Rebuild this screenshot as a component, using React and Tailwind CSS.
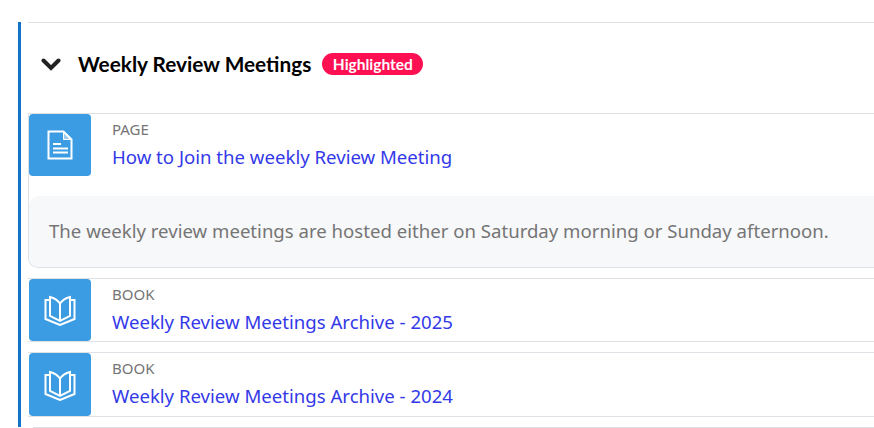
function Chevron() {
  return (
    <svg width="20" height="13" viewBox="0 0 20 13" fill="none" stroke="#222222" strokeWidth="4" strokeLinecap="round" strokeLinejoin="miter">
      <path d="M2.500 2.500 10 10l7.500-7.500" />
    </svg>
  );
}

function PageIcon() {
  return (
    <svg width="26" height="30" viewBox="0 0 26 30" fill="none" stroke="white" strokeWidth="2">
      <path d="M1.500 1.500h15l8 8v19h-23z" />
      <path d="M16.500 1.500v8h8" fill="white" fillOpacity="0.5" strokeWidth="1" />
      <path d="M6 14h8M6 18.500h15M6 22.500h15" strokeWidth="2" />
    </svg>
  );
}

function BookIcon() {
  return (
    <svg width="32" height="32" viewBox="0 0 32 32" fill="none" stroke="white" strokeWidth="2">
      <path d="M16 9.500C13.500 6 9.500 3.800 6 3v19l10 5 10-5V3c-3.500.8-7.500 3-10 6.500V27" />
      <path d="M6 6H1.500v19L16 31l14.500-6V6H26" />
    </svg>
  );
}

function ItemRow({ kind, title, icon, tall }) {
  return (
    <div className={`flex border-y border-[#dee2e6] ${tall ? 'h-[65px]' : 'h-[64px]'}`}>
      <div className={`ml-px w-[62px] -mb-px bg-[#3b9ce3] rounded-[4px] flex items-center justify-center shrink-0 ${tall ? 'h-[63px]' : 'h-[62px]'}`}>
        {icon}
      </div>
      <div className="pl-[21px] pt-[5px]">
        <div className="text-[15px] leading-[20px] text-[#757575]">{kind}</div>
        <div className="text-[18.6px] leading-[24px] mt-[6px] text-[#3339e8]">{title}</div>
      </div>
    </div>
  );
}

export default function App() {
  return (
    <div className="w-[874px] h-[428px] overflow-hidden bg-white pt-[22px] pl-[18px] font-['Noto_Sans','Open_Sans',sans-serif]">
      <div className="border-l-[3px] border-[#1273c9] pl-[7px] mt-px h-[405px] -mb-px">
        <div className="-mt-px border-t border-[#dee2e6] h-[91px] flex items-center pl-[13px] pb-[8px]">
          <Chevron />
          <span className="ml-[17px] text-[20.800px] font-bold text-black font-['Lato',sans-serif]">Weekly Review Meetings</span>
          <span className="ml-[11px] bg-[#ff1053] text-white text-[15.500px] font-bold leading-[22px] px-[10.500px] rounded-full font-['Lato',sans-serif]">Highlighted</span>
        </div>

        <div className="border-l border-[#dee2e6] border-b rounded-bl-[10px] h-[155px]">
          <div className="flex border-t border-[#dee2e6] h-[83px]">
            <div className="w-[62px] h-[62px] bg-[#3b9ce3] rounded-[4px] flex items-center justify-center shrink-0">
              <PageIcon />
            </div>
            <div className="pl-[21px] pt-[5px]">
              <div className="text-[15px] leading-[20px] text-[#757575]">PAGE</div>
              <div className="text-[18.6px] leading-[24px] mt-[6px] text-[#3339e8]">How to Join the weekly Review Meeting</div>
            </div>
          </div>
          <div className="bg-[#f7f8fa] h-[71px] rounded-bl-[10px] rounded-tl-[10px] pl-[20px] pb-[2px] flex items-center text-[18.6px] text-[#757575]">
            The weekly review meetings are hosted either on Saturday morning or Sunday afternoon.
          </div>
        </div>

        <div className="mt-[10px]">
          <ItemRow kind="BOOK" title="Weekly Review Meetings Archive - 2025" icon={<BookIcon />} />
        </div>
        <div className="mt-[10px]">
          <ItemRow tall kind="BOOK" title="Weekly Review Meetings Archive - 2024" icon={<BookIcon />} />
        </div>
        <div className="mt-[10px] border-t border-[#dee2e6] ml-[5px]" />
      </div>
    </div>
  );
}
